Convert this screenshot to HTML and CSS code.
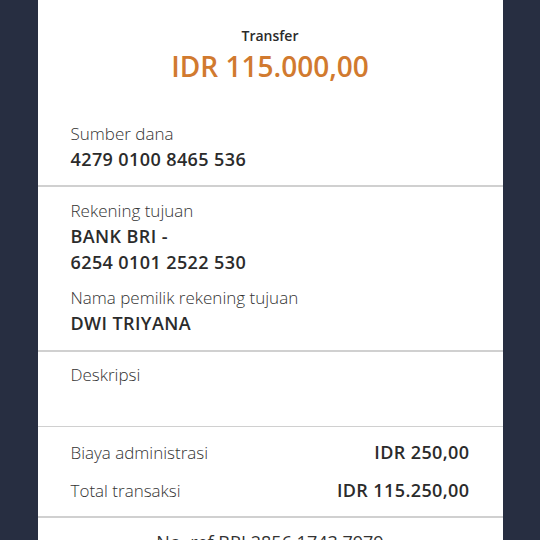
FILE: index.html
```html
<!DOCTYPE html>
<html lang="id">
<head>
  <meta charset="UTF-8" />
  <meta name="viewport" content="width=device-width, initial-scale=1.0"/>
  <title>Konfirmasi Transfer</title>
  <link rel="stylesheet" href="styles.css">
</head>

<body>
  <div class="panel">
    <div class="header">
      <div class="type">Transfer</div>
      <div class="amount">IDR 115.000,00</div>
    </div>

    <div class="section first">
      <div class="label">Sumber dana</div>
      <div class="value">4279 0100 8465 536</div>
    </div>

    <div class="section">
      <div class="label">Rekening tujuan</div>
      <div class="value">BANK BRI -</div>
      <div class="value">6254 0101 2522 530</div>
      <div class="label gap">Nama pemilik rekening tujuan</div>
      <div class="value">DWI TRIYANA</div>
    </div>

    <div class="section desc">
      <div class="label">Deskripsi</div>
    </div>

    <div class="section fees">
      <div class="row">
        <span class="label">Biaya administrasi</span>
        <span class="value">IDR 250,00</span>
      </div>
      <div class="row">
        <span class="label">Total transaksi</span>
        <span class="value">IDR 115.250,00</span>
      </div>
    </div>

    <div class="ref">No. ref BRI 2856 1743 7979</div>
  </div>
</body>
</html>
```

FILE: styles.css
```css
body {
  margin: 0;
  padding: 0;
  background-color: #272e41;
  font-family: "Open Sans", Arial, sans-serif;
  color: #2b2b2b;
  height: 540px;
  overflow: hidden;
}

.panel {
  width: 465px;
  margin: 0 auto;
  background-color: #ffffff;
  min-height: 540px;
}

.header {
  text-align: center;
  padding-top: 27px;
  padding-bottom: 38px;
}

.type {
  font-size: 14px;
  font-weight: 600;
  line-height: 18px;
}

.amount {
  font-size: 28px;
  font-weight: 600;
  color: #d17a2f;
  line-height: 36px;
  margin-top: 3px;
}

.section {
  padding: 12px 33px 14px;
  border-top: 2px solid #d0d0d0;
}

.section.first {
  border-top: none;
  padding-top: 0;
  padding-bottom: 13px;
}

.label {
  font-size: 17px;
  font-weight: 300;
  line-height: 24px;
  color: #333333;
}

.label.gap {
  margin-top: 11px;
}

.value {
  font-size: 18px;
  font-weight: 600;
  line-height: 26px;
  letter-spacing: 0.4px;
}

.desc {
  padding-top: 11px;
  padding-bottom: 39px;
}

.fees {
  border-top-width: 1px;
  padding-top: 13px;
  padding-bottom: 13px;
}

.row {
  display: flex;
  justify-content: space-between;
  align-items: baseline;
  line-height: 25px;
}

.row + .row {
  margin-top: 13px;
}

.row .label,
.row .value {
  line-height: 25px;
}

.ref {
  border-top: 2px solid #d0d0d0;
  text-align: center;
  font-size: 18px;
  font-weight: 400;
  line-height: 25px;
  color: #333333;
  padding-top: 12px;
}
```
